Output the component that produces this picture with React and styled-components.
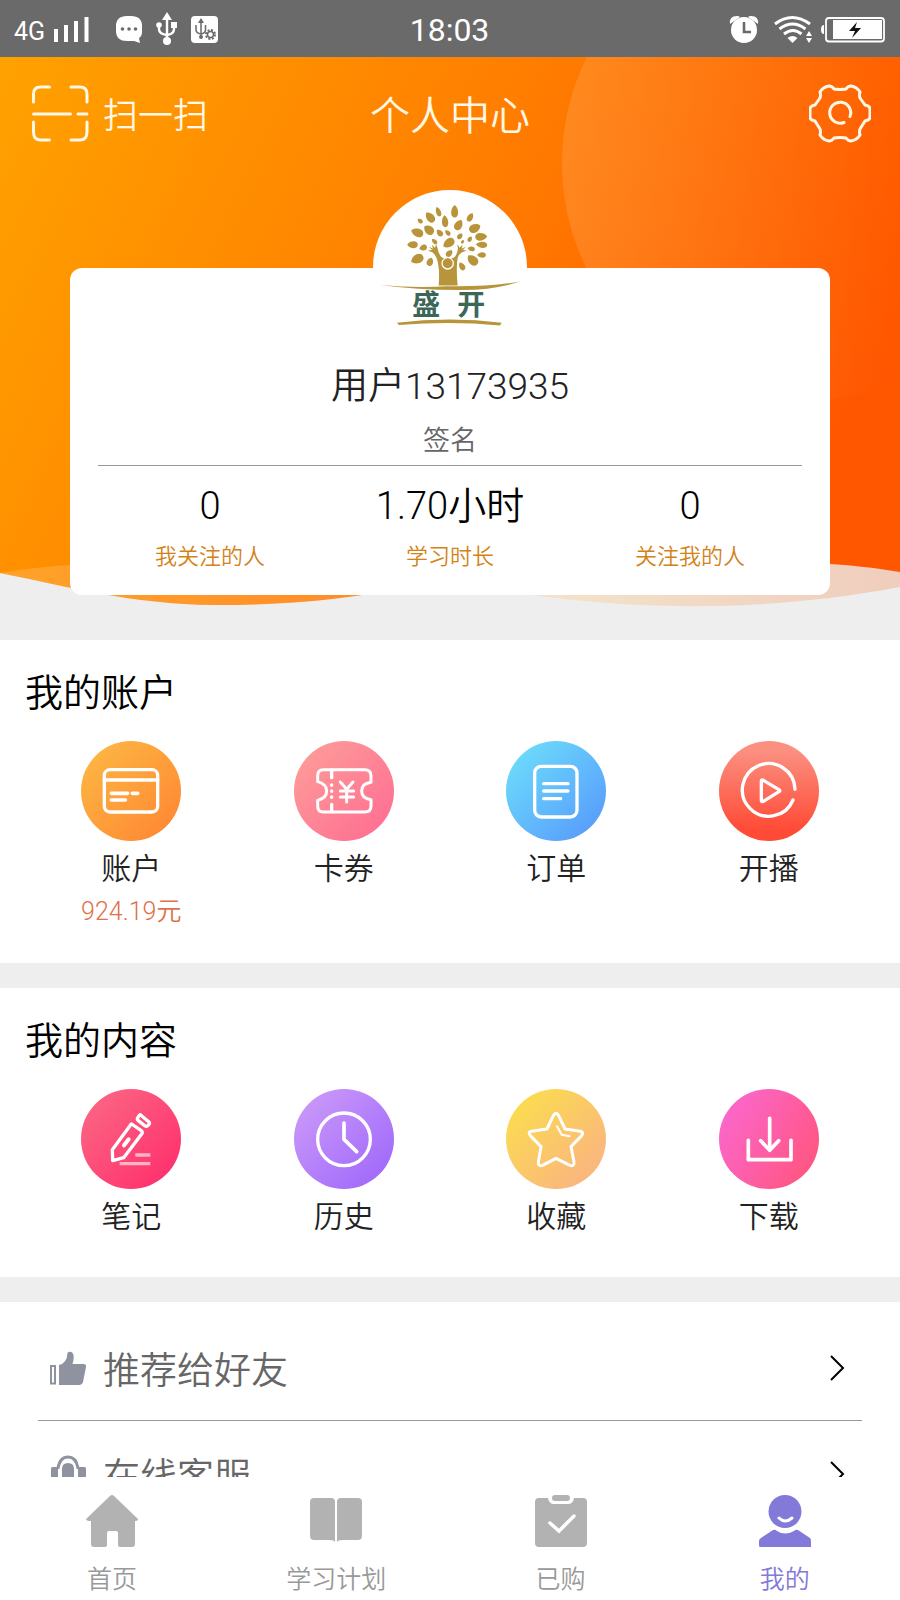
import React from "react";
import styled, { createGlobalStyle } from "styled-components";

const GlobalStyle = createGlobalStyle`
  * {
    box-sizing: border-box;
  }
  body {
    margin: 0;
    background: #fff;
    font-family: "Noto Sans CJK SC", sans-serif;
    font-weight: 350;
  }
  h1, h2, p {
    margin: 0;
    font-weight: inherit;
  }
  button {
    padding: 0;
    border: 0;
    background: none;
    color: inherit;
    font: inherit;
    cursor: pointer;
  }
  a {
    color: inherit;
    text-decoration: none;
  }
  svg {
    display: block;
    flex: none;
  }
`;

const Page = styled.div`
  display: flex;
  flex-direction: column;
  height: 100vh;
`;

const StatusBar = styled.header`
  display: grid;
  grid-template-columns: 1fr auto 1fr;
  align-items: center;
  flex: none;
  height: 57px;
  padding: 0 15px 0 14px;
  background: #6a6a6a;
  color: #fff;
  font-family: Roboto, sans-serif;
  font-weight: 400;
`;

const StatusGroup = styled.div`
  display: flex;
  align-items: center;
  justify-content: ${(props) => (props.$end ? "flex-end" : "flex-start")};
`;

const Network = styled.span`
  margin: 6px 8px 0 0;
  font-size: 25px;
  line-height: 32px;
`;

const Time = styled.time`
  padding-top: 2px;
  font-size: 32px;
  line-height: 40px;
`;

const Content = styled.main`
  flex: 1;
  min-height: 0;
  overflow-y: auto;
  background: #eee;
  scrollbar-width: none;
`;

const Hero = styled.section`
  position: relative;
  padding-bottom: 45px;
`;

const Backdrop = styled.svg`
  position: absolute;
  top: 0;
  left: 0;
  width: 100%;
  height: 100%;
`;

const NavBar = styled.div`
  position: relative;
  display: grid;
  grid-template-columns: 1fr auto 1fr;
  align-items: center;
  height: 112px;
  padding: 0 29px;
  color: #fff8e6;
`;

const ScanButton = styled.button`
  display: flex;
  align-items: center;
  gap: 14px;
  font-size: 35px;
  line-height: 44px;
`;

const NavTitle = styled.h1`
  font-size: 40px;
  line-height: 48px;
`;

const SettingsButton = styled.button`
  justify-self: end;
`;

const ProfileCard = styled.div`
  position: relative;
  display: flex;
  flex-direction: column;
  align-items: center;
  margin: 99px 70px 0;
  padding-bottom: 27px;
  border-radius: 12px;
  background: #fff;
`;

const Avatar = styled.div`
  width: 154px;
  height: 154px;
  margin-top: -78px;
  border-radius: 50%;
  background: #fff;
`;

/* digits and latin text next to the Chinese glyphs */
const Num = styled.span`
  font-family: Roboto, sans-serif;
  font-weight: 300;
  line-height: 1;
`;

const UserName = styled.h2`
  margin-top: 17px;
  color: #222;
  font-size: 37px;
  line-height: 44px;
`;

const Signature = styled.p`
  margin-top: 18px;
  color: #666;
  font-size: 27px;
  line-height: 32px;
`;

const Divider = styled.hr`
  align-self: stretch;
  height: 1px;
  margin: 10px 28px 15px;
  border: 0;
  background: #999;
`;

const Stats = styled.div`
  display: grid;
  grid-template-columns: repeat(3, 1fr);
  align-self: stretch;
  padding: 0 20px;
`;

const Stat = styled.a`
  display: flex;
  flex-direction: column;
  align-items: center;
  gap: 15px;
`;

const StatValue = styled.span`
  color: #000;
  font-size: 38px;
  line-height: 44px;
`;

const StatLabel = styled.span`
  color: #d48218;
  font-size: 22px;
  line-height: 28px;
`;

const Section = styled.section`
  margin-bottom: 25px;
  padding: 28px 25px ${(props) => props.$foot}px;
  background: #fff;
`;

const SectionTitle = styled.h2`
  margin-bottom: 29px;
  color: #000;
  font-size: 38px;
  line-height: 44px;
`;

const Grid = styled.div`
  display: grid;
  grid-template-columns: repeat(4, 1fr);
`;

const Entry = styled.a`
  display: flex;
  flex-direction: column;
  align-items: center;
`;

const Disc = styled.span`
  display: block;
  width: 100px;
  height: 100px;
  border-radius: 50%;
  background: linear-gradient(${(props) => props.$fill});
`;

const EntryLabel = styled.span`
  margin-top: 7px;
  color: #222;
  font-size: 30px;
  line-height: 36px;
`;

const Amount = styled.span`
  margin-top: 10px;
  color: #e0714b;
  font-size: 25px;
  line-height: 30px;
`;

const Menu = styled.nav`
  padding: 13px 38px 0;
  background: #fff;
`;

const MenuRow = styled.a`
  display: flex;
  align-items: center;
  height: 106px;
  padding: 0 17px 0 11px;
  border-bottom: 1px solid #999;
  color: #666;
  font-size: 37px;
  line-height: 44px;
`;

const MenuText = styled.span`
  flex: 1;
  margin-left: 16px;
`;

const TabBar = styled.nav`
  display: grid;
  grid-template-columns: repeat(4, 1fr);
  flex: none;
  padding: 18px 3px 8px 0;
  background: #fff;
`;

const Tab = styled.a`
  display: flex;
  flex-direction: column;
  align-items: center;
  gap: 15px;
  color: ${(props) => (props.$active ? "#8379d9" : "#999")};
  font-size: 25px;
  line-height: 30px;
`;

/* status bar icons */

const LeftStatusIcons = () => (
  <svg width="166" height="35" viewBox="54 11 166 35" fill="#fff" aria-hidden="true">
    <path d="M55 29h4v13h-4zM65 25h4v17h-4zM75 21h4v21h-4zM85.500 17h4v25h-4z" />
    <path d="M128 16h4q11 0 11 10v6q0 4-3 6l1 5-6-2h-7q-11 0-11-10v-5q0-10 11-10z" />
    <g fill="#6a6a6a">
      <circle cx="123.500" cy="29" r="1.800" />
      <circle cx="130" cy="29" r="1.800" />
      <circle cx="136.500" cy="29" r="1.800" />
    </g>
    <path d="M168 12l5 8h-10z" />
    <circle cx="168" cy="41" r="4" />
    <circle cx="160" cy="25" r="2.800" />
    <path d="M172 22h6v6h-6z" />
    <path d="M168 18v22M160 25v4q0 5 8 6M175 25v4q0 5-7 6" stroke="#fff" strokeWidth="2.400" fill="none" />
    <rect x="192" y="16" width="27" height="27" rx="4" />
    <g stroke="#6a6a6a" fill="none" strokeWidth="1.500">
      <path d="M202 20v18M197 25v5q0 3 5 4M206.500 25v5q0 3-4.500 4" />
      <circle cx="211.500" cy="34.500" r="3" />
      <circle cx="211.500" cy="34.500" r="4.500" strokeDasharray="2 1.530" strokeWidth="2" />
    </g>
    <path d="M202 18l3 5h-6z" fill="#6a6a6a" />
    <circle cx="202" cy="37" r="2" fill="#6a6a6a" />
  </svg>
);

const RightStatusIcons = () => (
  <svg width="156" height="30" viewBox="729 13 156 30" fill="#fff" aria-hidden="true">
    <circle cx="744" cy="29" r="13" />
    <path d="M730 23q-1-8 7-8 2 0 3 1zM758 23q1-8-7-8-2 0-3 1z" />
    <path d="M744 21v10h7" fill="none" stroke="#6a6a6a" strokeWidth="2.600" />
    <g fill="none" stroke="#fff" strokeWidth="3">
      <path d="M775 23q17-13 35 0" />
      <path d="M779.500 28q13-10 26 0" />
      <path d="M784 33q9-7 17.500 0" />
    </g>
    <path d="M787.500 37q5-4 10 0l-5 5z" />
    <path d="M809 30l3 5h-6zM809 42l-3-5h6z" />
    <rect x="826" y="17" width="58" height="23.500" rx="3" fill="none" stroke="#fff" strokeWidth="1.800" />
    <path d="M833 19h49v19h-49zM824 24v9q-3 0-3-4.500t3-4.500z" />
    <path d="M857 21l-8 9h6l-3 7 9-10h-6z" fill="#111" />
  </svg>
);

/* nav icons */

const ScanIcon = () => (
  <svg width="60" height="60" viewBox="0 0 60 60" fill="none" stroke="#fff8e6" strokeWidth="3" strokeLinecap="round" aria-hidden="true">
    <path d="M4.500 19v-8q0-7 7-7h9M42 4h9q7 0 7 7v8M58 39v10q0 8-7 8h-9M20.500 57h-9q-7 0-7-8V39" />
    <path d="M4.500 31h37M49 31h9" />
  </svg>
);

const GearIcon = () => (
  <svg width="62" height="60" viewBox="0 0 62 60" fill="none" stroke="#fff8e6" strokeWidth="3" strokeLinecap="round" strokeLinejoin="round" aria-hidden="true">
    <path d="M20 3q3 0 5 3 6 1 12 0 2-3 5-3 6 1 9 6-1 3 0 6l5 7q5 1 5 4v8q0 3-5 4l-5 8q-1 3 0 6-3 5-9 6-3 0-5-3-6-1-12 0-2 3-5 3-6-1-9-6 1-3 0-6l-5-8q-5-1-5-4v-8q0-3 5-4l5-7q1-3 0-6 3-5 9-6z" />
    <path d="M41 33.500A10.500 10.500 0 1 0 35 39.500" />
  </svg>
);

/* x, y, half length, half width, rotation */
const leaves = [
  [240, 142, 18, 11, 50], [265, 125, 15, 7, 70], [314, 124, 19, 10, 90], [285, 154, 18, 9, 85],
  [210, 153, 9, 6, 40], [201, 188, 19, 12, 20], [236, 180, 17, 12, 40], [269, 189, 12, 8, 50],
  [326, 165, 17, 11, 120], [361, 142, 14, 8, 120], [375, 175, 18, 12, 155], [394, 201, 18, 11, 175],
  [395, 225, 17, 9, 5], [187, 225, 16, 10, 0], [219, 234, 12, 8, -20], [201, 268, 20, 13, -25],
  [240, 276, 13, 9, 110], [296, 220, 19, 12, -35], [293, 189, 10, 6, 45], [253, 215, 10, 6, 45],
  [330, 199, 10, 7, 130], [360, 208, 9, 6, 120], [338, 216, 6, 4, 120], [364, 237, 11, 7, 10],
  [368, 271, 19, 13, 45], [395, 256, 13, 8, 0], [336, 290, 13, 8, 60], [298, 251, 12, 8, 135],
];

const TreeLogo = () => (
  <svg width="154" height="154" viewBox="68 60 464 464" fill="#b8943a" role="img" aria-label="盛开">
    {leaves.map(([x, y, rx, ry, angle]) => (
      <path
        key={`${x}-${y}`}
        d={`M${-rx} 0C${-rx / 2} ${-ry * 1.4} ${rx} ${-ry * 1.4} ${rx} 0C${rx} ${ry * 1.4} ${-rx / 2} ${ry * 1.4} ${-rx} 0Z`}
        transform={`translate(${x} ${y}) rotate(${angle})`}
      />
    ))}
    <path d="M266 348q4-55-6-82-5-12-12-18l-15-6 13-1-10-10 13 6-4-12 10 9 3-11 5 14q1 9 6 17 5 13 25 13t25-13q4-8 5-17l-2-14 7 11 9-9-3 12 13-6-9 10 12 1-16 6q-10 6-12 18-5 27 0 82z" />
    <circle cx="293" cy="281" r="17" stroke="#fff" strokeWidth="4" />
    <path d="M90 346q100 10 200 4 130 2 220-14-80 26-180 25-130 0-240-15z" />
    <path d="M140 460q160-20 316 0l-6 8q-150-14-304-1z" />
    <g fill="#3c6658" fontSize="84" fontWeight="700">
      <text x="186" y="438">盛</text>
      <text x="322" y="438">开</text>
    </g>
  </svg>
);

/* white line icons that sit on the coloured discs */

const LineIcon = styled.svg.attrs({
  viewBox: "0 0 300 300",
  fill: "none",
  stroke: "#fff",
  strokeWidth: 10,
  strokeLinecap: "round",
  strokeLinejoin: "round",
  "aria-hidden": true,
})`
  width: 100px;
  height: 100px;
`;

const accountEntries = [
  {
    label: "账户",
    amount: "924.19",
    fill: "135deg, #fdbb45, #ff8331",
    icon: (
      <>
        <rect x="70" y="86" width="160" height="127" rx="17" />
        <path d="M70 117h160" strokeWidth="11" />
        <path d="M91 157h49M154 157h16M91 177h42" strokeWidth="11" />
      </>
    ),
  },
  {
    label: "卡券",
    fill: "135deg, #fda099, #ff6a92",
    icon: (
      <>
        <path d="M88 86h124q19 0 19 18v20q-28 4-28 26t28 26v19q0 18-19 18H88q-17 0-17-18v-17q27-7 27-28t-27-28v-18q0-18 17-18z" strokeWidth="9" />
        <path d="M113 87v23M113 190v22" />
        <path d="M113 132v1M113 150v1M113 168v1" />
        <path d="M139 123l19 22 19-22M139 150h40M139 168h40M158 145v38" strokeWidth="9" />
      </>
    ),
  },
  {
    label: "订单",
    fill: "135deg, #6fe3fb, #5595fc",
    icon: (
      <>
        <rect x="86" y="76" width="127" height="152" rx="20" />
        <path d="M113 128h73M113 150h73M113 173h51" />
      </>
    ),
  },
  {
    label: "开播",
    fill: "180deg, #fb8f80 10%, #ff4a35 90%",
    icon: (
      <>
        <path d="M228 145A79 79 0 1 0 222 177" />
        <path d="M127 121v57q0 6 6 3l47-29q5-3 0-6l-47-28q-6-3-6 3z" />
      </>
    ),
  },
];

const contentEntries = [
  {
    label: "笔记",
    fill: "135deg, #fb6b86, #ff2a6a",
    icon: (
      <>
        <path d="M152 105l29 20q5 5 1 10l-54 71-33 9-1-33 53-72q3-5 5-5z" />
        <path d="M178 77l25 21q5 5 0 9-5 8-12 3l-20-16q-4-4 0-9 4-7 7-8z" />
        <path d="M143 151l-14 18" strokeWidth="12" />
        <path d="M163 198h45M116 224h92" stroke="#ffb3c6" strokeLinecap="butt" />
      </>
    ),
  },
  {
    label: "历史",
    fill: "135deg, #cf9ef9, #9b63fb",
    icon: (
      <>
        <circle cx="150" cy="151" r="79" />
        <path d="M150 102v49l38 37" strokeWidth="11" />
      </>
    ),
  },
  {
    label: "收藏",
    fill: "135deg, #fbe04b 5%, #fbb87c 80%",
    icon: (
      <>
        <path d="M142 80q8-14 16 0l19 40 45 7q13 2 5 13l-32 33 9 46q2 14-12 10l-42-21-41 21q-13 4-12-10l8-46-32-33q-9-11 4-13l46-7z" strokeWidth="9" />
        <path d="M153 112l14 25 24 5" strokeWidth="6" />
      </>
    ),
  },
  {
    label: "下载",
    fill: "120deg, #fb67cc 10%, #ff5580 90%",
    icon: (
      <path d="M88 154v58h128v-58M152 88v92M125 155l27 29 27-29" strokeWidth="11" />
    ),
  },
];

/* menu icons */

const ThumbIcon = () => (
  <svg width="38" height="36" viewBox="0 0 38 36" fill="#8f93a0" aria-hidden="true">
    <path d="M2 16h4v17.500H2z" fill="none" stroke="#8f93a0" strokeWidth="2" />
    <path d="M10 15q8-2 8.500-12 1-2 4-1 3 2 2 8l-1 4h11q3 0 2.500 3l-3 15q-1 3-4 3H10z" />
  </svg>
);

const HeadsetIcon = () => (
  <svg width="38" height="38" viewBox="0 0 38 38" fill="#8f93a0" aria-hidden="true">
    <path d="M9 14v-1Q11 2 19 2t10 11v1" fill="none" stroke="#8f93a0" strokeWidth="3" />
    <path d="M3 12h6v17H5q-3 0-3-3V13zM29 12h7l1 1v13q0 3-3 3h-5z" />
    <path d="M13 29V14q0-6 6-6t6 6v15z" />
    <path d="M33 28q0 7-9 7" fill="none" stroke="#8f93a0" strokeWidth="3" />
  </svg>
);

const Chevron = () => (
  <svg width="16" height="28" viewBox="0 0 16 28" fill="none" stroke="#000" strokeWidth="2" aria-hidden="true">
    <path d="M2 2l12 12L2 26" />
  </svg>
);

const tabs = [
  {
    label: "首页",
    icon: <path d="M26 0q1 0 2 1l24 23q0 2-3 2v23q0 3-3 3H34q-2 0-2-2V38q0-2-2-2h-7q-2 0-2 2v12q0 2-2 2H8q-3 0-3-3V26q-5 0-5-2L24 1q1-1 2-1z" fill="#b2b2b2" />,
  },
  {
    label: "学习计划",
    icon: <path d="M4 3h17q4 0 4 4v40q-1-2-5-2H4q-4 0-4-4V7q0-4 4-4zM31 3h17q4 0 4 4v34q0 4-4 4H32q-4 0-5 2V7q0-4 4-4z" fill="#b2b2b2" />,
  },
  {
    label: "已购",
    icon: (
      <>
        <rect x="17" y="0" width="18" height="6" rx="3" fill="#b2b2b2" />
        <path d="M4 3h9q1 6 6 6h14q5 0 6-6h9q4 0 4 4v41q0 4-4 4H4q-4 0-4-4V7q0-4 4-4z" fill="#b2b2b2" />
        <path d="M15 28l9 8 15-15" fill="none" stroke="#fff" strokeWidth="3.500" strokeLinecap="round" />
      </>
    ),
  },
  {
    label: "我的",
    active: true,
    icon: (
      <>
        <circle cx="26" cy="16.500" r="16.500" fill="#8379d9" />
        <path d="M20 23q6 6 13 0" fill="none" stroke="#fff" strokeWidth="3" strokeLinecap="round" />
        <path d="M14 35q2-1 4 1 8 5 17 0 2-2 4-1l12 8q1 1 1 3v6H1q-1 0-1-2v-4q0-2 2-3z" fill="#8379d9" />
      </>
    ),
  },
];

function HeroBackdrop() {
  return (
    <Backdrop viewBox="0 0 900 583" preserveAspectRatio="none" aria-hidden="true">
      <defs>
        <linearGradient id="sunset" gradientUnits="userSpaceOnUse" x1="0" y1="0" x2="840" y2="400">
          <stop offset="0" stopColor="#ffa200" />
          <stop offset="0.500" stopColor="#ff7f00" />
          <stop offset="1" stopColor="#ff5600" />
        </linearGradient>
        <linearGradient id="glow">
          <stop offset="0" stopColor="#fff" stopOpacity="0.120" />
          <stop offset="0.700" stopColor="#fff" stopOpacity="0" />
        </linearGradient>
        <linearGradient id="mist">
          <stop offset="0" stopColor="#f3e6cc" />
          <stop offset="1" stopColor="#f0cdbd" />
        </linearGradient>
        <clipPath id="wave">
          <path d="M0 0H900V515Q865 509 830 507C620 480 460 518 362 538C310 546 260 548 215 548C130 547 70 530 0 516Z" />
        </clipPath>
      </defs>
      <path d="M500 533C600 550 740 560 900 530V510L830 500H500Z" fill="url(#mist)" />
      <g clipPath="url(#wave)">
        <rect width="900" height="583" fill="url(#sunset)" />
        <circle cx="800" cy="106" r="238" fill="url(#glow)" />
        <path d="M0 516Q35 510 70 508Q220 490 362 538V583H0Z" fill="#fff" fillOpacity="0.160" />
      </g>
    </Backdrop>
  );
}

function EntrySection({ title, entries, foot }) {
  return (
    <Section $foot={foot}>
      <SectionTitle>{title}</SectionTitle>
      <Grid>
        {entries.map((entry) => (
          <Entry key={entry.label} href="#">
            <Disc $fill={entry.fill}>
              <LineIcon>{entry.icon}</LineIcon>
            </Disc>
            <EntryLabel>{entry.label}</EntryLabel>
            {entry.amount && (
              <Amount>
                <Num>{entry.amount}</Num>元
              </Amount>
            )}
          </Entry>
        ))}
      </Grid>
    </Section>
  );
}

export default function App() {
  return (
    <Page>
      <GlobalStyle />
      <StatusBar>
        <StatusGroup>
          <Network>4G</Network>
          <LeftStatusIcons />
        </StatusGroup>
        <Time>18:03</Time>
        <StatusGroup $end>
          <RightStatusIcons />
        </StatusGroup>
      </StatusBar>

      <Content>
        <Hero>
          <HeroBackdrop />
          <NavBar>
            <ScanButton type="button">
              <ScanIcon />
              扫一扫
            </ScanButton>
            <NavTitle>个人中心</NavTitle>
            <SettingsButton type="button" aria-label="设置">
              <GearIcon />
            </SettingsButton>
          </NavBar>
          <ProfileCard>
            <Avatar>
              <TreeLogo />
            </Avatar>
            <UserName>
              用户<Num>13173935</Num>
            </UserName>
            <Signature>签名</Signature>
            <Divider />
            <Stats>
              <Stat href="#">
                <StatValue>
                  <Num>0</Num>
                </StatValue>
                <StatLabel>我关注的人</StatLabel>
              </Stat>
              <Stat href="#">
                <StatValue>
                  <Num>1.70</Num>小时
                </StatValue>
                <StatLabel>学习时长</StatLabel>
              </Stat>
              <Stat href="#">
                <StatValue>
                  <Num>0</Num>
                </StatValue>
                <StatLabel>关注我的人</StatLabel>
              </Stat>
            </Stats>
          </ProfileCard>
        </Hero>

        <EntrySection title="我的账户" entries={accountEntries} foot={39} />
        <EntrySection title="我的内容" entries={contentEntries} foot={45} />

        <Menu>
          <MenuRow href="#">
            <ThumbIcon />
            <MenuText>推荐给好友</MenuText>
            <Chevron />
          </MenuRow>
          <MenuRow href="#">
            <HeadsetIcon />
            <MenuText>在线客服</MenuText>
            <Chevron />
          </MenuRow>
        </Menu>
      </Content>

      <TabBar>
        {tabs.map((tab) => (
          <Tab key={tab.label} href="#" $active={tab.active}>
            <svg width="52" height="52" viewBox="0 0 52 52" aria-hidden="true">
              {tab.icon}
            </svg>
            {tab.label}
          </Tab>
        ))}
      </TabBar>
    </Page>
  );
}
